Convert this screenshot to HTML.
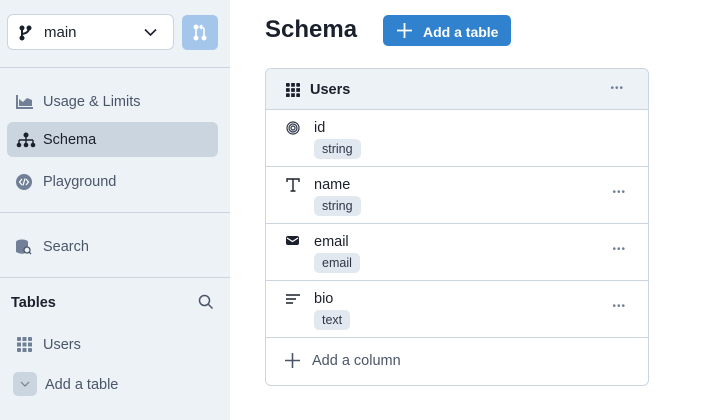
<!DOCTYPE html>
<html><head><style>
*{box-sizing:border-box;margin:0;padding:0}
body{width:701px;height:420px;overflow:hidden;background:#fff;font-family:"Liberation Sans",sans-serif;position:relative;color:#1a202c}
.sb{position:absolute;left:0;top:0;width:230px;height:420px;background:#edf2f7}
.hr{position:absolute;left:0;width:230px;height:1px;background:#cbd5e0}
.sel{position:absolute;left:7px;top:14px;width:167px;height:36px;background:#fff;border:1px solid #cbd5e0;border-radius:6px}
.sel span{position:absolute;left:36px;top:9px;font-size:15px}
.bb{position:absolute;left:182px;top:15px;width:36px;height:35px;background:#a3c6ea;border-radius:5px}
.nav{position:absolute;left:7px;width:211px;height:35px;border-radius:6px;font-size:14.5px;color:#4a5568}
.nav span{position:absolute;left:36px;top:10px}
.nav svg{position:absolute;left:9px;top:10px}
.t{position:absolute;font-size:14.5px}
.card{position:absolute;left:265px;top:68px;width:384px;height:318px;border:1px solid #cbd5e0;border-radius:6px;overflow:hidden}
.hd{height:41px;background:#edf2f7;border-bottom:1px solid #cbd5e0;position:relative}
.row{height:57px;border-bottom:1px solid #cbd5e0;position:relative}
.row .n{position:absolute;left:48px;top:10px;font-size:14.5px}
.tag{position:absolute;left:48px;top:29px;height:20px;padding:0 8px;background:#e2e8f0;border-radius:5px;font-size:12.5px;line-height:20px;color:#2d3748}
.dots{position:absolute;right:22px;font-size:10px;color:#718096;letter-spacing:1px}
.ic{position:absolute;left:20px;top:11px}
</style></head><body>
<div class="sb"></div>
<div class="sel">
<svg style="position:absolute;left:11px;top:10px" width="14" height="16" viewBox="0 0 14 16"><circle cx="3" cy="3" r="2.5" fill="#1a202c"/><circle cx="10" cy="3" r="2.5" fill="#1a202c"/><circle cx="3" cy="13" r="2.5" fill="#1a202c"/><path d="M3 3V13M10 3Q10 8 3 9" stroke="#1a202c" stroke-width="2" fill="none"/></svg>
<span>main</span>
<svg style="position:absolute;right:16px;top:13px" width="13" height="9" viewBox="0 0 13 9"><path d="M1 1.5L6.5 7L12 1.5" stroke="#1a202c" stroke-width="1.6" fill="none"/></svg>
</div>
<div class="bb"><svg style="position:absolute;left:11px;top:9px" width="14" height="17" viewBox="0 0 14 17"><circle cx="3" cy="3" r="2.5" fill="#fff"/><circle cx="3" cy="14" r="2.5" fill="#fff"/><circle cx="11" cy="14" r="2.5" fill="#fff"/><path d="M3 3V14M11 14V6Q11 3 8 3M9 1L7 3L9 5" stroke="#fff" stroke-width="1.6" fill="none"/></svg></div>
<div class="hr" style="top:67px"></div>
<div class="nav" style="top:84px"><svg width="18" height="15" viewBox="0 0 18 15"><path d="M1 1V14H17" stroke="#718096" stroke-width="2" fill="none"/><path d="M3 12V5L7 8L11 4L16 6V12Z" fill="#718096"/></svg><span>Usage &amp; Limits</span></div>
<div class="nav" style="top:122px;background:#cbd5e0;color:#1a202c"><svg width="20" height="16" viewBox="0 0 20 16"><circle cx="10" cy="3" r="2.5" fill="#1a202c"/><path d="M10 5V8M3 8H17M3 8V11M10 8V11M17 8V11" stroke="#1a202c" stroke-width="1.4" fill="none"/><circle cx="3" cy="13" r="2.3" fill="#1a202c"/><circle cx="10" cy="13" r="2.3" fill="#1a202c"/><circle cx="17" cy="13" r="2.3" fill="#1a202c"/></svg><span>Schema</span></div>
<div class="nav" style="top:164px"><svg width="16" height="16" viewBox="0 0 16 16"><circle cx="8" cy="8" r="8" fill="#718096"/><path d="M6 5L3.5 8L6 11M10 5L12.5 8L10 11M9 4.5L7 11.5" stroke="#fff" stroke-width="1.2" fill="none"/></svg><span>Playground</span></div>
<div class="hr" style="top:212px"></div>
<div class="nav" style="top:229px"><svg width="16" height="16" viewBox="0 0 16 16"><ellipse cx="6" cy="3" rx="6" ry="2.5" fill="#718096"/><path d="M0 3V13Q6 16 9 14V8H12V3Z" fill="#718096"/><circle cx="11" cy="11" r="3" stroke="#4a5568" stroke-width="1.3" fill="#edf2f7"/><path d="M13 13L15 15" stroke="#4a5568" stroke-width="1.3"/></svg><span>Search</span></div>
<div class="hr" style="top:277px"></div>
<div class="t" style="left:11px;top:295px;font-weight:bold;color:#1a202c">Tables</div>
<svg style="position:absolute;left:198px;top:294px" width="16" height="16" viewBox="0 0 16 16"><circle cx="6.5" cy="6.5" r="5" stroke="#4a5568" stroke-width="1.5" fill="none"/><path d="M10 10L14.5 14.5" stroke="#4a5568" stroke-width="1.5"/></svg>
<svg style="position:absolute;left:17px;top:337px" width="15" height="15" viewBox="0 0 15 15"><g fill="#718096"><rect x="0" y="0" width="4" height="4" rx="1"/><rect x="5.5" y="0" width="4" height="4"/><rect x="11" y="0" width="4" height="4" rx="1"/><rect x="0" y="5.5" width="4" height="4"/><rect x="5.5" y="5.5" width="4" height="4"/><rect x="11" y="5.5" width="4" height="4"/><rect x="0" y="11" width="4" height="4" rx="1"/><rect x="5.5" y="11" width="4" height="4"/><rect x="11" y="11" width="4" height="4" rx="1"/></g></svg>
<div class="t" style="left:43px;top:337px;color:#4a5568">Users</div>
<div style="position:absolute;left:13px;top:372px;width:24px;height:24px;background:#cbd5e0;border-radius:5px"><svg style="position:absolute;left:7px;top:9px" width="10" height="6" viewBox="0 0 10 6"><path d="M1 1L5 5L9 1" stroke="#718096" stroke-width="1.2" fill="none"/></svg></div>
<div class="t" style="left:45px;top:377px;color:#4a5568">Add a table</div>

<div style="position:absolute;left:265px;top:16px;font-size:24px;font-weight:bold;color:#1a202c">Schema</div>
<div style="position:absolute;left:383px;top:15px;width:128px;height:31px;background:#3182ce;border-radius:5px;color:#fff;font-size:14px;font-weight:bold">
<svg style="position:absolute;left:14px;top:8px" width="15" height="15" viewBox="0 0 15 15"><path d="M7.5 0V15M0 7.5H15" stroke="#fff" stroke-width="1.8"/></svg>
<span style="position:absolute;left:40px;top:9px">Add a table</span></div>

<div class="card">
<div class="hd">
<svg style="position:absolute;left:20px;top:14px" width="14" height="14" viewBox="0 0 15 15"><g fill="#1a202c"><rect x="0" y="0" width="4" height="4" rx="1"/><rect x="5.5" y="0" width="4" height="4"/><rect x="11" y="0" width="4" height="4" rx="1"/><rect x="0" y="5.5" width="4" height="4"/><rect x="5.5" y="5.5" width="4" height="4"/><rect x="11" y="5.5" width="4" height="4"/><rect x="0" y="11" width="4" height="4" rx="1"/><rect x="5.5" y="11" width="4" height="4"/><rect x="11" y="11" width="4" height="4" rx="1"/></g></svg>
<span style="position:absolute;left:44px;top:13px;font-size:14.5px;font-weight:bold">Users</span>
<span class="dots" style="right:24px;top:14px">•••</span></div>
<div class="row"><svg class="ic" width="14" height="14" viewBox="0 0 14 14"><g stroke="#2d3748" stroke-width="1.2" fill="none"><circle cx="7" cy="7" r="6"/><circle cx="7" cy="7" r="4"/><circle cx="7" cy="7" r="2"/></g></svg><span class="n">id</span><span class="tag">string</span></div>
<div class="row"><svg class="ic" width="14" height="14" viewBox="0 0 14 14"><path d="M1 4V1H13V4M7 1V13M4.5 13H9.5" stroke="#1a202c" stroke-width="1.4" fill="none"/></svg><span class="n">name</span><span class="tag">string</span><span class="dots" style="top:20px">•••</span></div>
<div class="row"><svg class="ic" width="13" height="11" viewBox="0 0 13 11"><rect x="0" y="1" width="13" height="9" rx="2" fill="#1a202c"/><path d="M1 3L6.5 6.5L12 3" stroke="#fff" stroke-width="1.2" fill="none"/></svg><span class="n">email</span><span class="tag">email</span><span class="dots" style="top:20px">•••</span></div>
<div class="row"><svg class="ic" style="top:13px" width="14" height="10" viewBox="0 0 14 10"><path d="M0 1H14M0 5H10M0 9H7" stroke="#1a202c" stroke-width="1.4"/></svg><span class="n">bio</span><span class="tag">text</span><span class="dots" style="top:20px">•••</span></div>
<div style="position:relative;height:48px"><svg style="position:absolute;left:19px;top:15px" width="15" height="15" viewBox="0 0 15 15"><path d="M7.5 0V15M0 7.5H15" stroke="#4a5568" stroke-width="1.6"/></svg><span style="position:absolute;left:46px;top:15px;font-size:14.5px;color:#4a5568">Add a column</span></div>
</div>
</body></html>
